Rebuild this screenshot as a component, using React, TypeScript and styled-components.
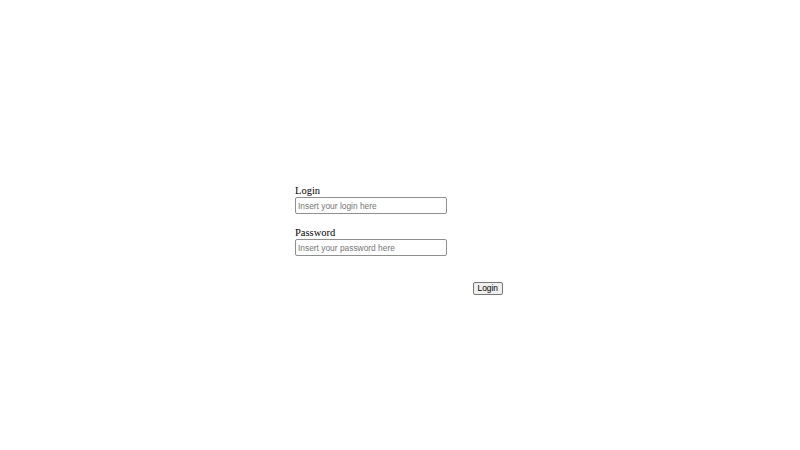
import styled, {createGlobalStyle} from "styled-components";

const GlobalStyle = createGlobalStyle`
    html, body {
        margin: 0;
        padding: 0;
        background: #ffffff;
    }
`

export default function App() {
    return <>
        <GlobalStyle/>
        <Page>
            <Form onSubmit={e => e.preventDefault()}>
                <Field>
                    <Label htmlFor="login">Login</Label>
                    <Input id="login" type="text" placeholder="Insert your login here"/>
                </Field>
                <Field>
                    <Label htmlFor="password">Password</Label>
                    <Input id="password" type="password" placeholder="Insert your password here"/>
                </Field>
                <Button type="submit">Login</Button>
            </Form>
        </Page>
    </>
}

const Page = styled.div`
    width: 800px;
    height: 450px;
    display: flex;
    justify-content: center;
    padding: 185px 2px 0 0;
    box-sizing: border-box;
`

const Form = styled.form`
    width: 208px;
    display: flex;
    flex-direction: column;
    align-items: flex-start;
`

const Field = styled.div`
    display: flex;
    flex-direction: column;
    margin-bottom: 13px;

    &:last-of-type {
        margin-bottom: 26px;
    }
`

const Label = styled.label`
    font-family: "Liberation Serif", "Times New Roman", serif;
    font-size: 10.5px;
    line-height: 12px;
    color: #000000;
`

const Input = styled.input`
    width: 152px;
    height: 17px;
    box-sizing: border-box;
    padding: 0 2px;
    border: 1px solid #8f8f8f;
    border-radius: 2px;
    font-family: "Liberation Sans", Arial, sans-serif;
    font-size: 8.4px;
    color: #000000;
    outline: none;

    &::placeholder {
        color: #757575;
    }
`

const Button = styled.button`
    align-self: flex-end;
    height: 13px;
    padding: 0 4px;
    box-sizing: border-box;
    border: 1px solid #767676;
    border-radius: 2px;
    background: #efefef;
    font-family: "Liberation Sans", Arial, sans-serif;
    font-size: 8.4px;
    line-height: 11px;
    color: #000000;
`
